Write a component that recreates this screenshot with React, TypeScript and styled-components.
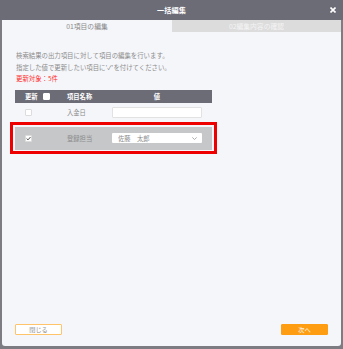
import React from "react";
import styled, { createGlobalStyle } from "styled-components";

const Global = createGlobalStyle`
  html, body { margin: 0; padding: 0; }
  body {
    width: 343px;
    height: 349px;
    overflow: hidden;
    background: #7c7c82;
    font-family: "Noto Sans CJK JP", "Noto Sans", sans-serif;
  }
`;

const Frame = styled.div`
  width: 343px;
  height: 349px;
  display: flex;
  flex-direction: column;
`;

const Header = styled.div`
  height: 20px;
  flex: none;
  background: #6c6c77;
  display: flex;
  align-items: center;
  justify-content: center;
  position: relative;
  color: #ffffff;
  font-size: 7.2px;
  font-weight: 700;
`;

const Close = styled.div`
  position: absolute;
  right: 7px;
  top: 7px;
  width: 6px;
  height: 6px;
  display: flex;
`;

const Body = styled.div`
  margin: 0 2px;
  height: 326px;
  background: #f5f6fa;
  border-radius: 0 0 3px 3px;
  display: flex;
  flex-direction: column;
`;

const Tabs = styled.div`
  display: flex;
  height: 12px;
  flex: none;
`;

const Tab = styled.div<{ $active?: boolean }>`
  width: ${(p) => (p.$active ? "170px" : "auto")};
  flex: ${(p) => (p.$active ? "none" : "1")};
  background: ${(p) => (p.$active ? "#f5f6fa" : "#dcdcdc")};
  color: ${(p) => (p.$active ? "#8a8a8a" : "#f4f4f4")};
  font-size: 6.8px;
  display: flex;
  align-items: center;
  justify-content: center;
`;

const Content = styled.div`
  flex: 1;
  padding: 18px 0 0 13px;
`;

const Line = styled.div<{ $red?: boolean }>`
  height: 11.7px;
  line-height: 11.7px;
  font-size: 6.4px;
  padding-left: 1px;
  color: ${(p) => (p.$red ? "#ff2a2a" : "#8c8c8c")};
  white-space: nowrap;
`;

const Table = styled.div`
  margin-top: 4.5px;
  width: 197px;
`;

const Grid = styled.div`
  display: grid;
  grid-template-columns: 40px 50px 107px;
  align-items: center;
`;

const HeadRow = styled(Grid)`
  height: 13px;
  background: #6c6c77;
  color: #ffffff;
  font-size: 6.3px;
  font-weight: 700;
`;

const Row = styled(Grid)<{ $shade?: boolean }>`
  height: ${(p) => (p.$shade ? "23px" : "19px")};
  background: ${(p) => (p.$shade ? "#c5c7c9" : "transparent")};
  color: #8c8c8c;
  font-size: 6.3px;
`;

const Highlight = styled.div`
  margin: 0 -5px;
  border: 3px solid #ee0000;
  padding: 2px 2px 1px;
`;

const CheckCell = styled.div`
  padding-left: 10px;
  display: flex;
  align-items: center;
  gap: 5px;
`;

const NameCell = styled.div`
  padding-left: 12px;
  white-space: nowrap;
`;

const ValueCell = styled.div<{ $center?: boolean }>`
  padding-left: 7px;
  width: 90px;
  text-align: ${(p) => (p.$center ? "center" : "left")};
`;

const Box = styled.div<{ $white?: boolean }>`
  width: 7px;
  height: 7px;
  box-sizing: border-box;
  background: #ffffff;
  border: 1px solid ${(p) => (p.$white ? "#ffffff" : "#dcdcdc")};
  border-radius: 1px;
  display: flex;
  align-items: center;
  justify-content: center;
`;

const Input = styled.div`
  width: 90px;
  height: 11px;
  box-sizing: border-box;
  background: #ffffff;
  border: 1px solid #e2e2e2;
  border-radius: 1px;
  margin-top: 1px;
`;

const Select = styled.div`
  width: 90px;
  height: 10px;
  box-sizing: border-box;
  background: #ffffff;
  border-radius: 1px;
  display: flex;
  align-items: center;
  justify-content: space-between;
  padding: 0 5px 0 6px;
  color: #8c8c8c;
  font-size: 6.3px;
  white-space: pre;
`;

const Footer = styled.div`
  display: flex;
  justify-content: space-between;
  padding: 0 13px 11px;
`;

const Button = styled.div<{ $primary?: boolean }>`
  width: 47px;
  height: 11px;
  box-sizing: border-box;
  border: 1px solid ${(p) => (p.$primary ? "#ff9d12" : "#ffc46a")};
  border-radius: 1px;
  background: ${(p) => (p.$primary ? "#ff9d12" : "#ffffff")};
  color: ${(p) => (p.$primary ? "#ffffff" : "#8c8c8c")};
  font-size: 6.2px;
  display: flex;
  align-items: center;
  justify-content: center;
`;

export default function App() {
  return (
    <>
      <Global />
      <Frame>
        <Header>
          一括編集
          <Close>
            <svg width="6" height="6" viewBox="0 0 6 6">
              <path d="M0.5 0.5 L5.5 5.5 M5.5 0.5 L0.5 5.5" stroke="#fff" strokeWidth="1.6" />
            </svg>
          </Close>
        </Header>
        <Body>
          <Tabs>
            <Tab $active>01項目の編集</Tab>
            <Tab>02編集内容の確認</Tab>
          </Tabs>
          <Content>
            <Line>検索結果の出力項目に対して項目の編集を行います。</Line>
            <Line>指定した値で更新したい項目に'✓'を付けてください。</Line>
            <Line $red>更新対象：5件</Line>
            <Table>
              <HeadRow>
                <CheckCell>
                  更新
                  <Box $white />
                </CheckCell>
                <NameCell>項目名称</NameCell>
                <ValueCell $center>値</ValueCell>
              </HeadRow>
              <Row>
                <CheckCell>
                  <Box />
                </CheckCell>
                <NameCell>入金日</NameCell>
                <ValueCell>
                  <Input />
                </ValueCell>
              </Row>
              <Highlight>
                <Row $shade>
                  <CheckCell>
                    <Box>
                      <svg width="5" height="5" viewBox="0 0 5 5">
                        <path d="M0.6 2.5 L2 3.9 L4.5 1" stroke="#555" strokeWidth="1" fill="none" />
                      </svg>
                    </Box>
                  </CheckCell>
                  <NameCell>登録担当</NameCell>
                  <ValueCell>
                    <Select>
                      <span>佐藤　太郎</span>
                      <svg width="5" height="3" viewBox="0 0 5 3">
                        <path d="M0.3 0.4 L2.5 2.5 L4.7 0.4" stroke="#999" strokeWidth="0.8" fill="none" />
                      </svg>
                    </Select>
                  </ValueCell>
                </Row>
              </Highlight>
            </Table>
          </Content>
          <Footer>
            <Button>閉じる</Button>
            <Button $primary>次へ</Button>
          </Footer>
        </Body>
      </Frame>
    </>
  );
}
